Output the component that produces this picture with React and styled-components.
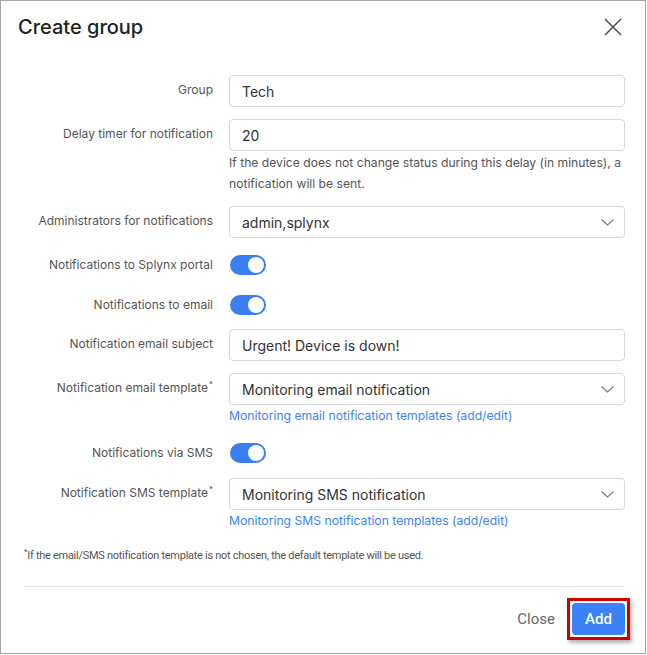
import React from "react";
import styled, { createGlobalStyle } from "styled-components";

const Global = createGlobalStyle`
  html, body { margin: 0; padding: 0; background: #fff; }
  * { box-sizing: border-box; }
`;

const Modal = styled.div`
  width: 646px;
  height: 654px;
  border: 1px solid #a6a6a6;
  background: #fff;
  display: flex;
  flex-direction: column;
  font-family: Inter, "Liberation Sans", sans-serif;
`;

const Header = styled.div`
  height: 74px;
  display: flex;
  align-items: flex-start;
  justify-content: space-between;
  padding: 14px 23px 0 17px;
`;

const Title = styled.h1`
  margin: 0;
  font-family: Inter, "Liberation Sans", sans-serif;
  font-size: 20px;
  font-weight: 500;
  line-height: 24px;
  color: #222;
`;

const CloseIcon = styled.button`
  border: 0;
  background: none;
  padding: 0;
  margin-top: 3px;
  width: 18px;
  height: 18px;
  cursor: pointer;
  display: flex;
`;

const Form = styled.div`
  display: flex;
  flex-direction: column;
  gap: 12px;
  padding: 0 20px 0 22px;
`;

const Row = styled.div`
  display: grid;
  grid-template-columns: 190px 1fr;
  column-gap: 16px;
  align-items: ${(p) => (p.$toggle ? "center" : "start")};
  height: ${(p) => (p.$h ? `${p.$h}px` : "auto")};
`;

const Label = styled.label`
  text-align: right;
  font-size: 12px;
  color: #555;
  line-height: ${(p) => (p.$toggle ? "16px" : "30px")};
  white-space: nowrap;
`;

const Sup = styled.sup`
  font-size: 8px;
  vertical-align: top;
  position: relative;
  top: -4px;
  margin-left: 1px;
`;

const Field = styled.div`
  display: flex;
  flex-direction: column;
`;

const Input = styled.div`
  height: 32px;
  border: 1px solid #d3d7dd;
  border-radius: 4px;
  padding: 0 10px 0 12px;
  display: flex;
  align-items: center;
  justify-content: space-between;
  font-size: 14px;
  color: #333;
`;

const Help = styled.div`
  margin-top: 1px;
  font-size: 12.15px;
  line-height: 21px;
  color: #555;
`;

const Link = styled.a`
  font-size: 12.2px;
  line-height: 22px;
  color: #3d83f0;
  text-decoration: none;
`;

const Toggle = styled.span`
  width: 36px;
  height: 20px;
  border-radius: 10px;
  background: #3a7ff0;
  position: relative;
  margin-left: 1px;
  &::after {
    content: "";
    position: absolute;
    right: 2px;
    top: 2px;
    width: 16px;
    height: 16px;
    border-radius: 50%;
    background: #fff;
  }
`;

const Note = styled.div`
  margin-top: 14px;
  font-family: Roboto, "Liberation Sans", sans-serif;
  font-size: 11px;
  letter-spacing: -0.28px;
  line-height: 20px;
  color: #555;
  padding: 0 22px;
`;

const Divider = styled.hr`
  margin: 20px 20px 0 22px;
  border: 0;
  border-top: 1px solid #e5e5e5;
`;

const Footer = styled.div`
  display: flex;
  justify-content: flex-end;
  align-items: center;
  gap: 12px;
  padding: 11px 15px 0 0;
`;

const TextButton = styled.button`
  border: 0;
  background: none;
  font-family: Roboto, "Liberation Sans", sans-serif;
  font-size: 15px;
  color: #666;
  padding: 0;
`;

const Highlight = styled.span`
  border: 3px solid #d00000;
  padding: 2px;
  display: inline-flex;
  box-shadow: 2px 3px 4px rgba(0, 0, 0, 0.3);
`;

const PrimaryButton = styled.button`
  width: 53px;
  height: 32px;
  border: 0;
  border-radius: 4px;
  background: #3b82f6;
  color: #fff;
  font-family: Roboto, "Liberation Sans", sans-serif;
  font-size: 15px;
  font-weight: 500;
`;

const Chevron = () => (
  <svg width="13" height="7" viewBox="0 0 13 7" fill="none">
    <path d="M0.5 0.5 L6.5 6 L12.5 0.5" stroke="#777" strokeWidth="1.1" />
  </svg>
);

const Select = ({ children }) => (
  <Input>
    <span>{children}</span>
    <Chevron />
  </Input>
);

export default function App() {
  return (
    <>
      <Global />
      <Modal>
        <Header>
          <Title>Create group</Title>
          <CloseIcon aria-label="Close">
            <svg width="18" height="18" viewBox="0 0 18 18">
              <path d="M1 1 L17 17 M17 1 L1 17" stroke="#444" strokeWidth="1.4" />
            </svg>
          </CloseIcon>
        </Header>
        <Form>
          <Row>
            <Label>Group</Label>
            <Input>Tech</Input>
          </Row>
          <Row>
            <Label>Delay timer for notification</Label>
            <Field>
              <Input>20</Input>
              <Help>
                If the device does not change status during this delay (in minutes), a notification will be sent.
              </Help>
            </Field>
          </Row>
          <Row>
            <Label>Administrators for notifications</Label>
            <Select>admin,splynx</Select>
          </Row>
          <Row $toggle $h={30}>
            <Label $toggle>Notifications to Splynx portal</Label>
            <Toggle />
          </Row>
          <Row $toggle $h={25}>
            <Label $toggle>Notifications to email</Label>
            <Toggle />
          </Row>
          <Row>
            <Label>Notification email subject</Label>
            <Input>Urgent! Device is down!</Input>
          </Row>
          <Row>
            <Label>
              Notification email template<Sup>*</Sup>
            </Label>
            <Field>
              <Select>Monitoring email notification</Select>
              <Link href="#">Monitoring email notification templates (add/edit)</Link>
            </Field>
          </Row>
          <Row $toggle $h={27}>
            <Label $toggle>Notifications via SMS</Label>
            <Toggle />
          </Row>
          <Row>
            <Label>
              Notification SMS template<Sup>*</Sup>
            </Label>
            <Field>
              <Select>Monitoring SMS notification</Select>
              <Link href="#">Monitoring SMS notification templates (add/edit)</Link>
            </Field>
          </Row>
        </Form>
        <Note>
          <Sup>*</Sup>If the email/SMS notification template is not chosen, the default template will be used.
        </Note>
        <Divider />
        <Footer>
          <TextButton>Close</TextButton>
          <Highlight>
            <PrimaryButton>Add</PrimaryButton>
          </Highlight>
        </Footer>
      </Modal>
    </>
  );
}
